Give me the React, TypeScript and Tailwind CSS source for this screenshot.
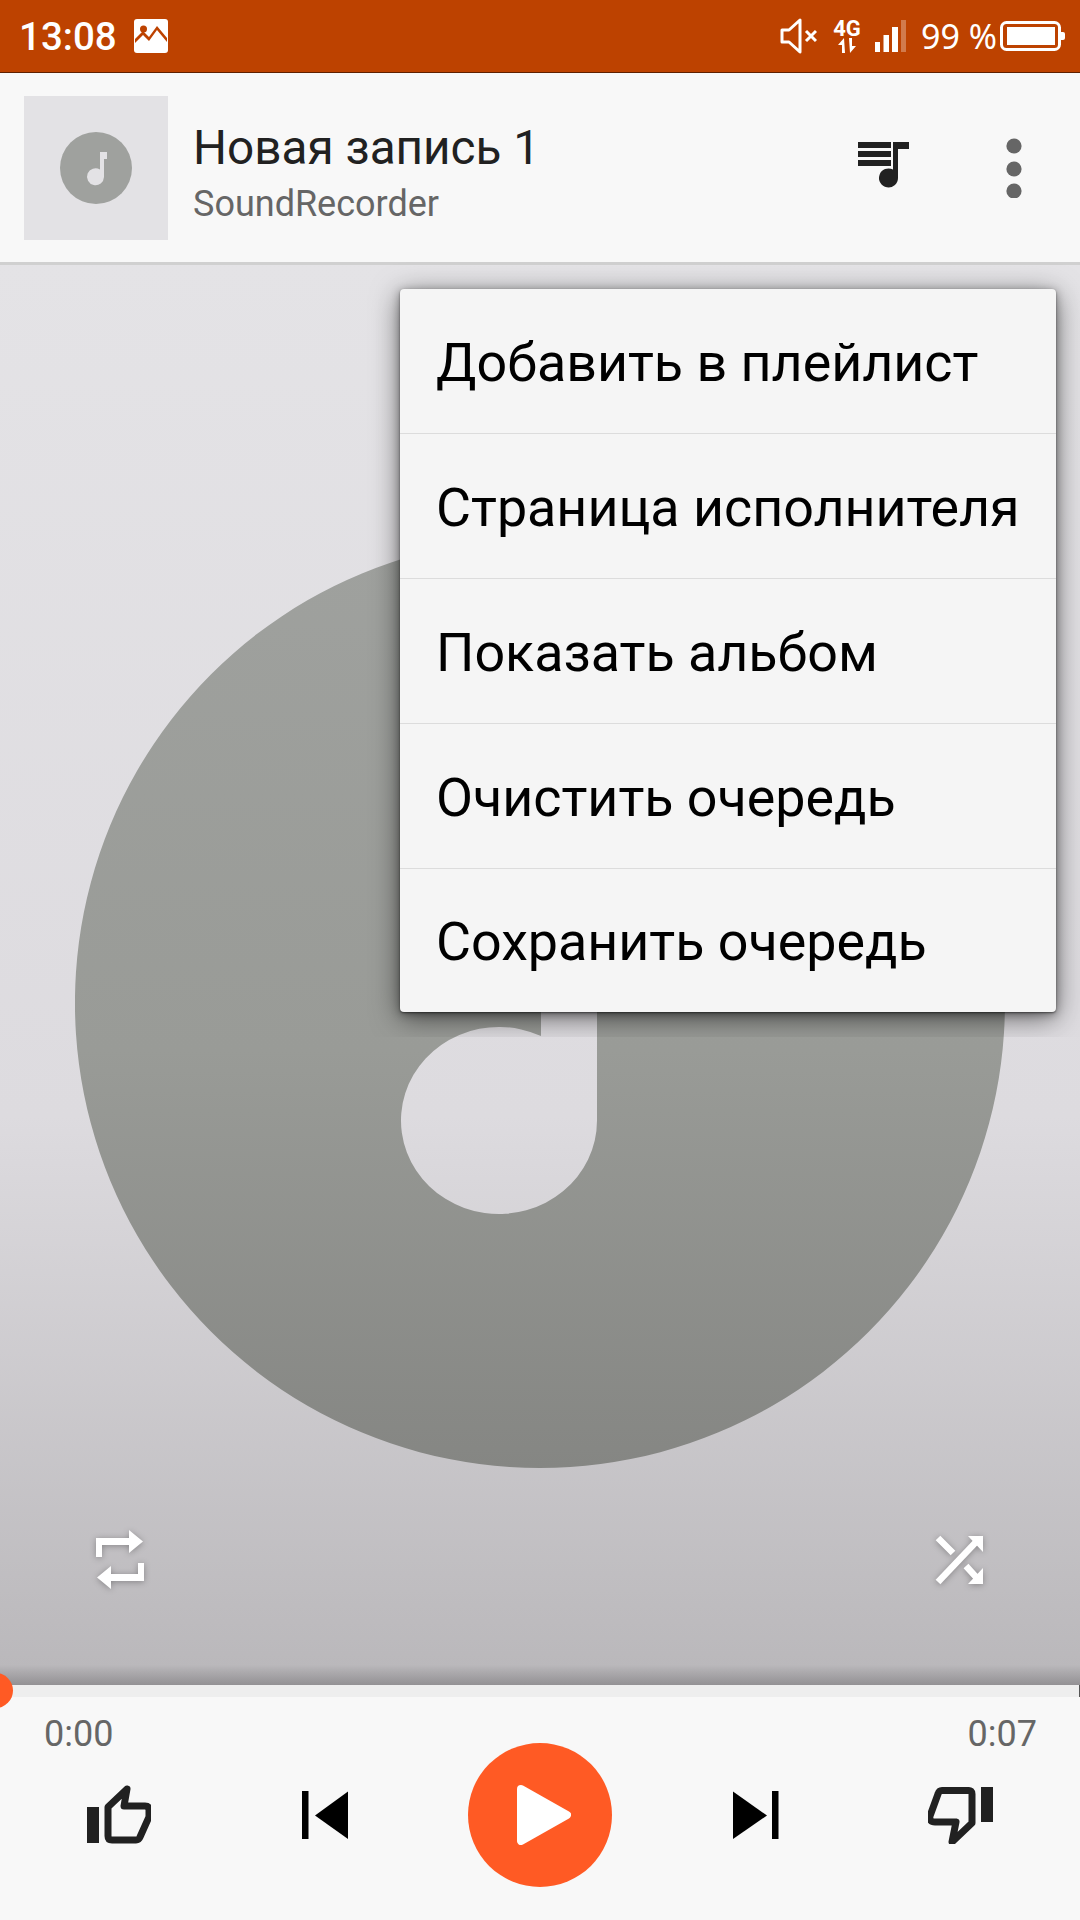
import React from "react";

const font = { fontFamily: "Roboto, 'Noto Sans', sans-serif" };

function StatusBar() {
  return (
    <div className="flex h-[73px] w-full shrink-0 items-center border-b border-[#5e2000] bg-[#bd4200] pl-[19px] pr-[14px] text-white">
      <span className="pt-[2px] text-[38.5px] font-medium leading-none">13:08</span>
      <svg className="ml-[17px]" width="34" height="34" viewBox="134 19 34 34">
        <rect x="134" y="19" width="34" height="34" rx="3" fill="#fff" />
        <circle cx="143.5" cy="29" r="3.5" fill="#bd4200" />
        <path d="M135 43 L143 35 L149 41 L157 30 L167 42 L167 38 L157 26 L149 37 L143 31 L135 39 Z" fill="#bd4200" />
      </svg>
      <div className="flex-1" />
      <svg width="37" height="36" viewBox="780 18 37 36">
        <path d="M782 30 H789 L800 20 V52 L789 42 H782 Z" fill="none" stroke="#fff" strokeWidth="3" strokeLinejoin="round" />
        <path d="M806 31 L816 41 M816 31 L806 41" stroke="#fff" strokeWidth="3" />
      </svg>
      <div className="ml-[17px] flex w-[26px] flex-col items-center">
        <span className="text-[22px] font-bold leading-[18px]">4G</span>
        <svg width="18" height="15" viewBox="0 0 18 15">
          <path d="M0 7 L6 0 L7 15 L4 15 L4 7 Z M11 0 L14 0 L14 8 L18 8 L12 15 Z" fill="#fff" />
        </svg>
      </div>
      <svg className="ml-[15px]" width="32" height="33" viewBox="875 20 32 33">
        <rect x="875" y="42" width="5" height="10" fill="#fff" />
        <rect x="883.5" y="35" width="5.5" height="17" fill="#fff" />
        <rect x="892" y="27" width="6" height="25" fill="#fff" />
        <rect x="901" y="20" width="5" height="32" fill="#fff" opacity="0.3" />
      </svg>
      <span className="ml-[14px] text-[34px] leading-none" style={{ fontFamily: "'Noto Sans', sans-serif" }}>99 %</span>
      <svg className="ml-[3px]" width="66" height="32" viewBox="1001 20 66 32">
        <rect x="1002.5" y="22.5" width="58" height="27" rx="5" fill="none" stroke="#fff" strokeWidth="3" />
        <rect x="1008" y="27" width="48" height="18" fill="#fff" />
        <path d="M1062 32 H1064 Q1066 32 1066 34 V38 Q1066 40 1064 40 H1062 Z" fill="#fff" />
      </svg>
    </div>
  );
}

function Header() {
  return (
    <div className="flex h-[192px] w-full shrink-0 items-center border-b-[3px] border-[#d0d0d0] bg-[#f8f8f8] pl-[24px] pt-[1px]">
      <div className="flex h-[144px] w-[144px] items-center justify-center bg-[#e3e2e5]">
        <svg width="72" height="72" viewBox="60 133 72 72">
          <circle cx="96" cy="169" r="36" fill="#9fa19e" />
          <path d="M100 153 H107 V160 H104 V178 A8.5 8.5 0 1 1 100 170.5 Z" fill="#e3e2e5" />
        </svg>
      </div>
      <div className="ml-[25px] mt-[10px] flex flex-col" style={font}>
        <span className="text-[47.7px] leading-[50px] text-[#212121]">Новая запись 1</span>
        <span className="mt-[11px] text-[36px] leading-[40px] text-[#666666]">SoundRecorder</span>
      </div>
      <div className="flex-1" />
      <svg width="52" height="52" viewBox="858 145 52 52">
        <rect x="858" y="145" width="33" height="6" fill="#212121" />
        <rect x="858" y="154" width="33" height="6" fill="#212121" />
        <rect x="858" y="163" width="33" height="6" fill="#212121" />
        <path d="M893 145 H909 V152 H898 V181 A9.5 9.5 0 1 1 893 172.6 Z" fill="#212121" />
      </svg>
      <svg className="ml-[96px] mr-[58px]" width="16" height="60" viewBox="1006 138 16 60">
        <circle cx="1014" cy="146" r="7.6" fill="#666" />
        <circle cx="1014" cy="169" r="7.6" fill="#666" />
        <circle cx="1014" cy="191" r="7.6" fill="#666" />
      </svg>
    </div>
  );
}

const items = ["Добавить в плейлист", "Страница исполнителя", "Показать альбом", "Очистить очередь", "Сохранить очередь"];

function Menu() {
  return (
    <div className="absolute left-[340px] top-[-16px] h-[788px] w-[740px] overflow-hidden pl-[60px] pt-[40px]">
      <div className="w-[656px] rounded-[4px] bg-[#f5f5f5] shadow-[0_6px_28px_rgba(0,0,0,0.55),0_2px_8px_rgba(0,0,0,0.35),0_1px_2px_rgba(0,0,0,0.45)]" style={font}>
        {items.map((t, i) => (
          <div
            key={t}
            className={`flex items-center pl-[36px] pt-[4px] text-[53.8px] text-black ${i < 4 ? "h-[145px] border-b border-[#dcdcdc]" : "h-[143px]"}`}
          >
            {t}
          </div>
        ))}
      </div>
    </div>
  );
}

function Art() {
  return (
    <div className="relative flex w-full flex-1 flex-col items-center bg-gradient-to-b from-[#e4e3e6] via-[#dddbdf] via-60% to-[#b9b7ba] pt-[273px]">
      <svg width="930" height="930" viewBox="74 538 930 930">
        <defs>
          <linearGradient id="disc" gradientUnits="userSpaceOnUse" x1="0" y1="538" x2="0" y2="1468">
            <stop offset="0" stopColor="#9fa19e" />
            <stop offset="0.55" stopColor="#999b97" />
            <stop offset="1" stopColor="#858683" />
          </linearGradient>
        </defs>
        <path
          fillRule="evenodd"
          fill="url(#disc)"
          d="M539 538 A465 465 0 1 1 538.9 538 Z M540 700 H596 V1120.5 A98 93.5 0 1 1 540 1036 Z"
        />
      </svg>
      <div className="mt-[62px] flex w-full items-start justify-between pl-[96px] pr-[95px]">
        <svg width="50" height="60" viewBox="96 1530 50 60" className="drop-shadow-[0_1px_3px_rgba(0,0,0,0.3)]">
          <path d="M96 1557 V1538 H129 V1530 L143 1541.5 L129 1553 V1545 H102 V1557 Z" fill="#fff" />
          <path d="M144 1563 V1581 H111 V1589 L97 1577.5 L111 1566 V1574 H138 V1563 Z" fill="#fff" />
        </svg>
        <svg width="50" height="50" viewBox="935 1535 50 50" className="mt-[5px] drop-shadow-[0_1px_3px_rgba(0,0,0,0.3)]">
          <path d="M968 1536 H983 V1552 Z" fill="#fff" />
          <path d="M983 1568 V1584 H968 Z" fill="#fff" />
          <path d="M938 1582 L976 1542" stroke="#fff" strokeWidth="6.5" />
          <path d="M938 1538 L953 1553 M966 1566 L976 1577" stroke="#fff" strokeWidth="6.5" />
        </svg>
      </div>
      <Menu />
      <div className="absolute bottom-0 left-0 h-[20px] w-full bg-gradient-to-b from-transparent to-[#939194]" />
    </div>
  );
}

function Controls() {
  return (
    <div className="relative h-[235px] w-full shrink-0" style={font}>
      <div className="h-[12px] w-full border-r border-[#555] bg-[#eeeeee]" />
      <div className="absolute left-[-22px] top-[-12px] h-[35px] w-[35px] rounded-full bg-[#ff5a24]" />
      <div className="h-[223px] bg-[#f8f8f8]">
        <div className="flex justify-between pl-[44px] pr-[43px] pt-[19px] text-[36px] leading-[36px] text-[#666666]">
          <span>0:00</span>
          <span>0:07</span>
        </div>
        <div className="-mt-[9px] flex items-center pl-[87px]">
          <svg width="64" height="60" viewBox="87 1784 64 60">
            <rect x="87" y="1806" width="12" height="36" fill="#212121" />
            <path
              d="M127 1788 L108 1806 V1835 Q108 1839 112 1839 H136 Q139 1839 140 1836 L149 1816 V1809 Q149 1805 145 1805 H124 Z"
              fill="none"
              stroke="#212121"
              strokeWidth="7"
              strokeLinejoin="round"
            />
          </svg>
          <svg className="ml-[151px]" width="46" height="48" viewBox="302 1791 46 48">
            <rect x="302" y="1791" width="6.5" height="48" fill="#000" />
            <path d="M315 1815.5 L348 1791.5 V1839 Z" fill="#000" />
          </svg>
          <div className="ml-[120px] flex h-[144px] w-[144px] items-center justify-center rounded-full bg-[#ff5a24]">
            <svg className="ml-[8px]" width="54" height="60" viewBox="520 1785 54 60">
              <path d="M524 1789 L570 1815 L524 1841 Z" fill="#fff" stroke="#fff" strokeWidth="8" strokeLinejoin="round" />
            </svg>
          </div>
          <svg className="ml-[121px]" width="46" height="48" viewBox="733 1791 46 48">
            <path d="M733 1791.5 L767 1815.5 L733 1839 Z" fill="#000" />
            <rect x="772" y="1791" width="6.5" height="48" fill="#000" />
          </svg>
          <svg className="ml-[149px]" width="66" height="58" viewBox="928 1787 66 58">
            <rect x="981" y="1788" width="12" height="35" fill="#212121" />
            <path
              d="M942 1791.5 H968 Q972 1791 972 1795 V1824 L952 1843 L956 1823 H935 Q929 1823 930 1817 L938 1795 Q939 1791.5 942 1791.5 Z"
              fill="none"
              stroke="#212121"
              strokeWidth="7"
              strokeLinejoin="round"
            />
          </svg>
        </div>
      </div>
    </div>
  );
}

export default function App() {
  return (
    <div className="flex h-[1920px] w-[1080px] flex-col overflow-hidden bg-[#f8f8f8]" style={font}>
      <StatusBar />
      <Header />
      <Art />
      <Controls />
    </div>
  );
}
